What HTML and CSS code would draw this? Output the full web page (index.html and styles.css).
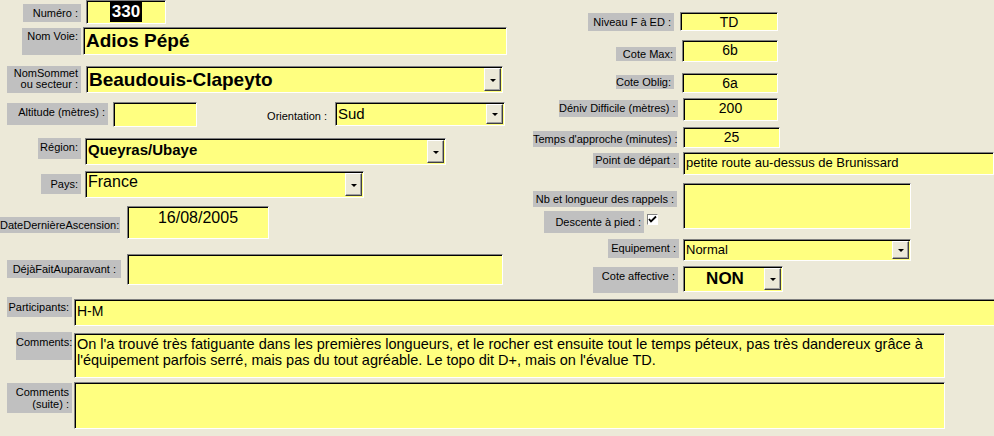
FILE: index.html
```html
<!DOCTYPE html>
<html lang="fr">
<head>
    <meta charset="UTF-8">
    <title>Voie</title>
    <link rel="stylesheet" href="styles.css">
</head>
<body>
    <div class="form">
        <div class="top">
            <div class="left">
                <div class="row r-num">
                    <div class="lbl l-num">Numéro :</div>
                    <div class="fld f-num"><span class="sel">330</span></div>
                </div>
                <div class="row r-voie">
                    <div class="lbl l-voie">Nom Voie:</div>
                    <div class="fld f-voie">Adios Pépé</div>
                </div>
                <div class="row r-sommet">
                    <div class="lbl l-sommet">NomSommet<br>ou secteur :</div>
                    <div class="fld combo f-sommet"><span class="txt">Beaudouis-Clapeyto</span><span class="dd"></span></div>
                </div>
                <div class="row r-alt">
                    <div class="lbl l-alt">Altitude (mètres) :</div>
                    <div class="fld f-alt"></div>
                    <div class="plain l-orient">Orientation :</div>
                    <div class="fld combo f-orient"><span class="txt">Sud</span><span class="dd"></span></div>
                </div>
                <div class="row r-region">
                    <div class="lbl l-region">Région:</div>
                    <div class="fld combo f-region"><span class="txt">Queyras/Ubaye</span><span class="dd"></span></div>
                </div>
                <div class="row r-pays">
                    <div class="lbl l-pays">Pays:</div>
                    <div class="fld combo f-pays"><span class="txt">France</span><span class="dd"></span></div>
                </div>
                <div class="row r-date">
                    <div class="lbl l-date">DateDernièreAscension:</div>
                    <div class="fld f-date">16/08/2005</div>
                </div>
                <div class="row r-deja">
                    <div class="lbl l-deja">DéjàFaitAuparavant :</div>
                    <div class="fld f-deja"></div>
                </div>
            </div>

            <div class="right">
                <div class="row r-niveau">
                    <div class="lbl l-niveau">Niveau F à ED :</div>
                    <div class="fld num f-niveau">TD</div>
                </div>
                <div class="row r-max">
                    <div class="lbl l-max">Cote Max:</div>
                    <div class="fld num f-max">6b</div>
                </div>
                <div class="row r-oblig">
                    <div class="lbl l-oblig">Cote Oblig:</div>
                    <div class="fld num f-oblig">6a</div>
                </div>
                <div class="row r-deniv">
                    <div class="lbl l-deniv">Déniv Difficile (mètres) :</div>
                    <div class="fld num f-deniv">200</div>
                </div>
                <div class="row r-temps">
                    <div class="lbl l-temps">Temps d'approche (minutes) :</div>
                    <div class="fld num f-temps">25</div>
                </div>
                <div class="row r-point">
                    <div class="lbl l-point">Point de départ :</div>
                    <div class="fld f-point">petite route au-dessus de Brunissard</div>
                </div>
                <div class="row r-rappels">
                    <div class="stack">
                        <div class="lbl l-rappels">Nb et longueur des rappels :</div>
                        <div class="row r-descente">
                            <div class="lbl l-descente">Descente à pied :</div>
                            <span class="check">
                                <svg width="9" height="9" viewBox="0 0 9 9"><path d="M1 4 L3 6.5 L8 1.5" fill="none" stroke="#000" stroke-width="1.8"/></svg>
                            </span>
                        </div>
                    </div>
                    <div class="fld f-rappels"></div>
                </div>
                <div class="row r-equip">
                    <div class="lbl l-equip">Equipement :</div>
                    <div class="fld combo f-equip"><span class="txt">Normal</span><span class="dd"></span></div>
                </div>
                <div class="row r-affect">
                    <div class="lbl l-affect">Cote affective :</div>
                    <div class="fld combo f-affect"><span class="txt">NON</span><span class="dd"></span></div>
                </div>
            </div>
        </div>

        <div class="bottom">
            <div class="row r-part">
                <div class="lbl l-part">Participants:</div>
                <div class="fld f-part">H-M</div>
            </div>
            <div class="row r-comm">
                <div class="lbl l-comm">Comments:</div>
                <div class="fld f-comm">On l'a trouvé très fatiguante dans les premières longueurs, et le rocher est ensuite tout le temps péteux, pas très dandereux grâce à l'équipement parfois serré, mais pas du tout agréable. Le topo dit D+, mais on l'évalue TD.</div>
            </div>
            <div class="row r-suite">
                <div class="lbl l-suite">Comments<br>(suite) :</div>
                <div class="fld f-suite"></div>
            </div>
        </div>
    </div>
</body>
</html>
```

FILE: styles.css
```css
body {
    margin: 0;
    background-color: #ece9d8;
    font-family: "Liberation Sans", Arial, sans-serif;
}
.form {
    width: 994px;
    height: 436px;
    overflow: hidden;
}
.top {
    display: flex;
    height: 297px;
}
.left {
    width: 520px;
    flex-shrink: 0;
}
.right {
    flex: 1;
}
.row {
    display: flex;
    align-items: flex-start;
}
.lbl {
    box-sizing: border-box;
    flex-shrink: 0;
    background-color: #c0c0c0;
    text-align: right;
    padding: 2px 3px 0 0;
    font-size: 11px;
    line-height: 12px;
    color: #000;
    white-space: nowrap;
}
.plain {
    box-sizing: border-box;
    flex-shrink: 0;
    text-align: right;
    font-size: 11px;
    line-height: 12px;
}
.fld {
    box-sizing: border-box;
    flex-shrink: 0;
    background-color: #ffff80;
    border-style: solid;
    border-width: 1px;
    border-color: #808080 #fff #fff #808080;
    box-shadow: inset 1px 1px 0 #000;
    padding: 1px 0 0 2px;
    font-size: 14px;
    line-height: 17px;
    color: #000;
    overflow: hidden;
    white-space: nowrap;
}
.combo {
    display: flex;
    padding: 1px 1px 1px 2px;
}
.combo .txt {
    flex: 1;
    overflow: hidden;
}
.dd {
    box-sizing: border-box;
    width: 17px;
    flex-shrink: 0;
    background-color: #ece9d8;
    border-style: solid;
    border-width: 1px;
    border-color: #fff #404040 #404040 #fff;
    box-shadow: inset -1px -1px 0 #a0a0a0;
    display: flex;
    align-items: center;
    justify-content: center;
}
.dd::after {
    content: "";
    border-left: 3px solid transparent;
    border-right: 3px solid transparent;
    border-top: 3px solid #000;
    margin-top: 1px;
}
.num {
    text-align: center;
    padding-left: 0;
}

/* colonne gauche */
.l-num { margin: 4px 0 0 23px; width: 58px; height: 18px; padding-top: 3px; }
.f-num { margin-left: 5px; width: 80px; height: 24px; text-align: center; font-weight: bold; font-size: 17px; line-height: 20px; padding-left: 0; }
.sel { background-color: #000; color: #fff; padding: 0 2px; display: inline-block; }

.r-voie { margin-top: 3px; }
.l-voie { margin: 1px 0 0 22px; width: 59px; height: 27px; }
.f-voie { margin-left: 2px; width: 424px; height: 28px; font-weight: bold; font-size: 19px; line-height: 24px; }

.r-sommet { margin-top: 11px; }
.l-sommet { margin-left: 7px; width: 74px; height: 27px; padding-top: 2px; line-height: 11px; }
.f-sommet { margin-left: 5px; width: 417px; height: 27px; font-weight: bold; font-size: 19px; line-height: 24px; }

.r-alt { margin-top: 9px; }
.l-alt { margin: 1px 0 0 7px; width: 101px; height: 22px; padding-top: 3px; }
.f-alt { margin-left: 5px; width: 84px; height: 25px; }
.l-orient { width: 138px; padding: 8px 8px 0 0; }
.f-orient { width: 170px; height: 24px; font-size: 15px; line-height: 19px; }

.r-region { margin-top: 11px; }
.l-region { margin-left: 38px; width: 43px; height: 21px; padding-top: 3px; }
.f-region { margin-left: 4px; width: 361px; height: 27px; font-weight: bold; font-size: 15px; line-height: 19px; }

.r-pays { margin-top: 6px; }
.l-pays { margin: 3px 0 0 41px; width: 40px; height: 20px; padding-top: 4px; }
.f-pays { margin-left: 4px; width: 279px; height: 27px; font-size: 16px; line-height: 18px; }

.r-date { margin-top: 8px; }
.l-date { margin-top: 11px; width: 120px; height: 16px; padding-top: 2px; }
.f-date { margin-left: 7px; width: 142px; height: 33px; text-align: center; font-size: 16px; line-height: 20px; padding-left: 0; }

.r-deja { margin-top: 15px; }
.l-deja { margin: 6px 0 0 7px; width: 114px; height: 18px; padding: 3px 5px 0 0; }
.f-deja { margin-left: 6px; width: 376px; height: 31px; }

/* colonne droite */
.r-niveau { margin-top: 12px; }
.l-niveau { margin: 1px 0 0 68px; width: 86px; height: 18px; padding-top: 3px; }
.f-niveau { margin-left: 6px; width: 98px; height: 19px; line-height: 16px; }

.r-max { margin-top: 9px; }
.l-max { margin: 7px 0 0 96px; width: 60px; height: 14px; padding-top: 1px; }
.f-max { margin-left: 6px; width: 96px; height: 22px; }

.r-oblig { margin-top: 11px; }
.l-oblig { margin: 2px 0 0 96px; width: 58px; height: 14px; padding-top: 1px; }
.f-oblig { margin-left: 8px; width: 96px; height: 20px; }

.r-deniv { margin-top: 5px; }
.l-deniv { margin: 2px 0 0 39px; width: 119px; height: 17px; padding-top: 2px; }
.f-deniv { margin-left: 5px; width: 95px; height: 23px; }

.r-temps { margin-top: 6px; }
.l-temps { margin: 4px 0 0 13px; width: 144px; height: 16px; padding-top: 2px; }
.f-temps { margin-left: 6px; width: 97px; height: 21px; }

.r-point { margin-top: 4px; }
.l-point { margin: 1px 0 0 73px; width: 86px; height: 15px; padding-top: 1px; }
.f-point { margin-left: 4px; width: 311px; height: 23px; font-size: 13px; line-height: 17px; }

.r-rappels { margin-top: 8px; }
.stack { width: 163px; flex-shrink: 0; }
.l-rappels { margin: 8px 0 0 13px; width: 144px; height: 16px; padding-top: 2px; }
.r-descente { margin-top: 4px; }
.l-descente { margin-left: 24px; width: 100px; height: 22px; padding-top: 5px; }
.check {
    box-sizing: border-box;
    width: 11px;
    height: 11px;
    margin: 3px 0 0 3px;
    background-color: #fff;
    border-style: solid;
    border-width: 1px;
    border-color: #808080 #fff #fff #808080;
    display: flex;
    align-items: center;
    justify-content: center;
}
.f-rappels { width: 228px; height: 46px; }

.r-equip { margin-top: 6px; }
.l-equip { margin-left: 88px; width: 71px; height: 19px; padding-top: 3px; }
.f-equip { margin-left: 4px; width: 228px; height: 22px; font-size: 13px; line-height: 17px; }

.r-affect { margin-top: 5px; }
.l-affect { margin: 1px 0 0 73px; width: 85px; height: 26px; padding-top: 3px; }
.f-affect { margin-left: 5px; width: 100px; height: 26px; font-weight: bold; font-size: 17px; line-height: 22px; }
.f-affect .txt { text-align: center; }

/* bas */
.l-part { margin-left: 7px; width: 65px; height: 20px; padding-top: 4px; }
.f-part { margin: 2px 0 0 2px; width: 930px; height: 27px; line-height: 20px; }

.r-comm { margin-top: 6px; }
.l-comm { margin-left: 16px; width: 56px; height: 28px; padding-top: 4px; }
.f-comm { margin: 1px 0 0 2px; width: 871px; height: 45px; white-space: normal; font-size: 14.5px; line-height: 16px; padding-top: 2px; }

.r-suite { margin-top: 4px; }
.l-suite { margin: 1px 0 0 7px; width: 65px; height: 30px; padding-top: 3px; }
.f-suite { margin-left: 2px; width: 871px; height: 47px; }
```
